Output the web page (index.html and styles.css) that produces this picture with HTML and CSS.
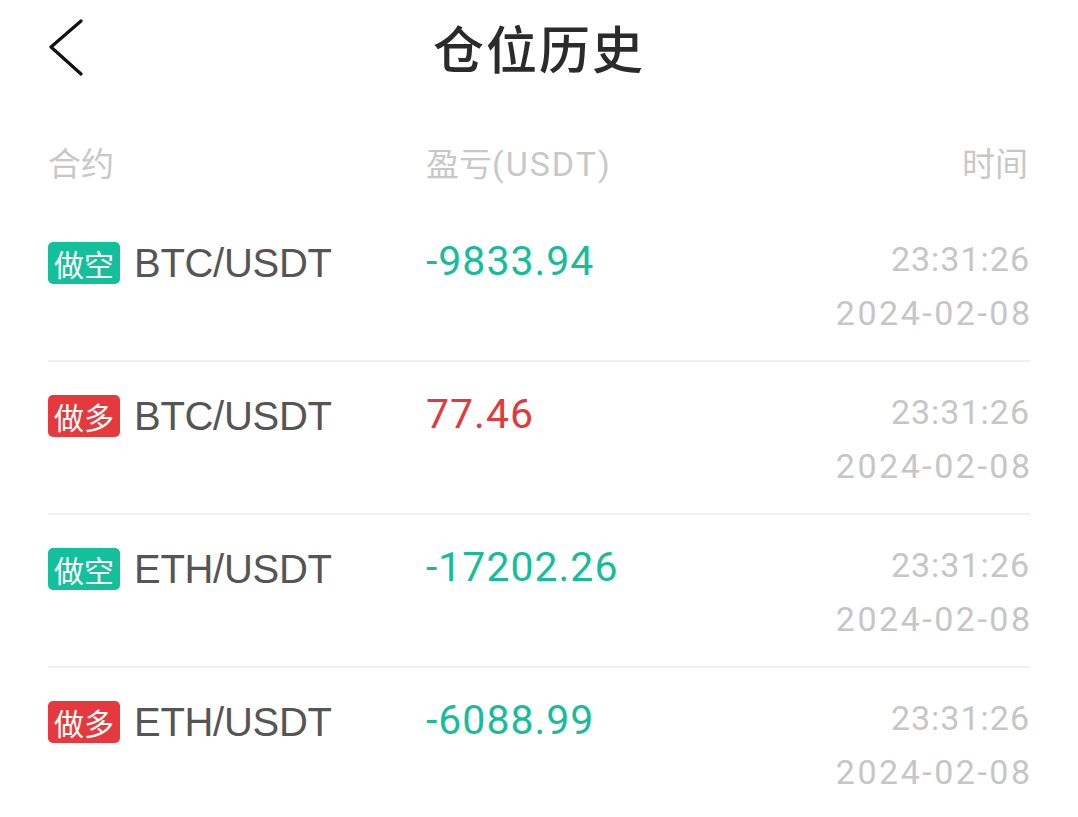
FILE: index.html
```html
<!DOCTYPE html>
<html lang="zh-CN">
  <head>
    <meta charset="UTF-8" />
    <meta name="viewport" content="width=device-width, initial-scale=1.0" />
    <title>仓位历史</title>
    <link rel="stylesheet" href="styles.css">
  </head>
  <body>
    <div class="topbar">
      <a class="back" href="#">
        <svg width="36" height="58" viewBox="0 0 36 58">
          <polyline points="33,2 3,28 33,55" fill="none" stroke="#111" stroke-width="3.2" stroke-linecap="round" stroke-linejoin="round" />
        </svg>
      </a>
      <h1 class="title">仓位历史</h1>
      <span></span>
    </div>

    <div class="list-head">
      <span>合约</span>
      <span>盈亏<span class="unit">(USDT)</span></span>
      <span class="right">时间</span>
    </div>

    <ul class="history">
      <li class="row">
        <div class="pair"><span class="tag short">做空</span>BTC/USDT</div>
        <div class="pnl loss">-9833.94</div>
        <div class="time">23:31:26<span class="date">2024-02-08</span></div>
      </li>
      <li class="row">
        <div class="pair"><span class="tag long">做多</span>BTC/USDT</div>
        <div class="pnl gain">77.46</div>
        <div class="time">23:31:26<span class="date">2024-02-08</span></div>
      </li>
      <li class="row">
        <div class="pair"><span class="tag short">做空</span>ETH/USDT</div>
        <div class="pnl loss">-17202.26</div>
        <div class="time">23:31:26<span class="date">2024-02-08</span></div>
      </li>
      <li class="row">
        <div class="pair"><span class="tag long">做多</span>ETH/USDT</div>
        <div class="pnl loss">-6088.99</div>
        <div class="time">23:31:26<span class="date">2024-02-08</span></div>
      </li>
    </ul>
  </body>
</html>
```

FILE: styles.css
```css
body {
  margin: 0;
  background: #fff;
  font-family: "Liberation Sans", "Noto Sans CJK SC", sans-serif;
  color: #555;
}

.topbar {
  display: grid;
  grid-template-columns: 1fr auto 1fr;
  align-items: center;
  height: 96px;
}

.back {
  display: block;
  margin-left: 48px;
  width: 36px;
  height: 58px;
}

.title {
  margin: 0 0 2px;
  font-family: "Noto Sans CJK SC", sans-serif;
  font-size: 51px;
  font-weight: 500;
  color: #2b2b2b;
  letter-spacing: 2px;
}

.list-head {
  display: grid;
  grid-template-columns: 378px 1fr 1fr;
  padding: 46px 50px 0 48px;
  height: 67px;
  line-height: 40px;
  font-family: "Noto Sans CJK SC", sans-serif;
  font-size: 33px;
  color: #c8c8c8;
}

.list-head .unit {
  font-family: "Roboto", sans-serif;
  font-size: 34px;
  letter-spacing: 2px;
}

.list-head .right {
  text-align: right;
}

.history {
  list-style: none;
  margin: 0;
  padding: 0 48px;
}

.row {
  display: grid;
  grid-template-columns: 378px 1fr auto;
  align-items: start;
  height: 151px;
  border-bottom: 2px solid #f0f0f0;
}

.row:last-child {
  border-bottom: none;
}

.pair {
  display: flex;
  align-items: center;
  padding-top: 29px;
  height: 50px;
  font-size: 40px;
  letter-spacing: -0.3px;
  color: #555;
}

.tag {
  display: inline-block;
  width: 72px;
  height: 42px;
  margin-right: 14px;
  border-radius: 5px;
  font-family: "Noto Sans CJK SC", sans-serif;
  font-size: 30px;
  line-height: 42px;
  letter-spacing: 0;
  text-align: center;
  color: #fff;
}

.tag.short {
  background-color: #14bf9c;
}

.tag.long {
  background-color: #e5393d;
}

.pnl {
  padding-top: 27px;
  line-height: 50px;
  font-family: "Roboto", sans-serif;
  font-size: 41px;
  letter-spacing: 1px;
}

.pnl.loss {
  color: #17bd9b;
}

.pnl.gain {
  color: #e0393e;
}

.time {
  padding-top: 23px;
  line-height: 54px;
  font-family: "Roboto", sans-serif;
  font-size: 34px;
  letter-spacing: 1px;
  text-align: right;
  color: #c6c6c6;
}

.date {
  display: block;
  letter-spacing: 2.5px;
  margin-right: -2.5px;
}
```
